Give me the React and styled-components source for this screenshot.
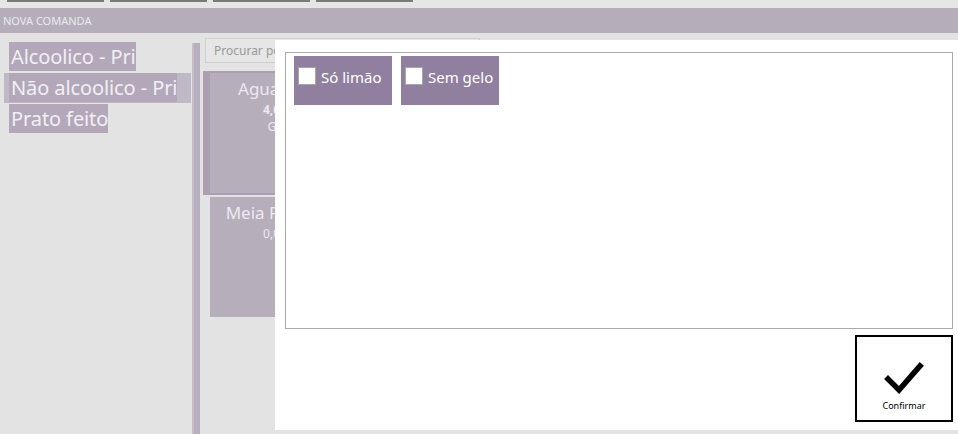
import React from 'react';
import styled, { createGlobalStyle } from 'styled-components';

const GlobalStyle = createGlobalStyle`
  html, body {
    margin: 0;
    padding: 0;
    background: #e3e3e3;
    font-family: "Noto Sans", "Open Sans", sans-serif;
  }
`;

const categories = [
  { name: 'Alcoolico - Pri' },
  { name: 'Não alcoolico - Pri', selected: true },
  { name: 'Prato feito' },
];

const options = ['Só limão', 'Sem gelo'];

const App = () => {
  return (
    <Page>
      <GlobalStyle />
      <Toolbar>
        <ToolButton />
        <ToolButton />
        <ToolButton />
        <ToolButton />
      </Toolbar>
      <Header>NOVA COMANDA</Header>
      <Body>
        <CategoryList>
          {categories.map((c) => (
            <CategoryRow key={c.name} $selected={c.selected}>
              <CategoryLabel>{c.name}</CategoryLabel>
            </CategoryRow>
          ))}
        </CategoryList>
        <ScrollBar />
        <Products>
          <Search placeholder="Procurar por nome" />
          <Tile $selected>
            <TileInner>
              <TileName>Agua gás</TileName>
              <TilePrice $bold>4,00</TilePrice>
              <TileUnit>GF</TileUnit>
            </TileInner>
          </Tile>
          <Tile>
            <TileInner>
              <TileName>Meia Porção</TileName>
              <TilePrice>0,00</TilePrice>
            </TileInner>
          </Tile>
        </Products>
      </Body>

      <Modal>
        <OptionsBox>
          {options.map((o) => (
            <Option key={o}>
              <Check />
              <OptionText>{o}</OptionText>
            </Option>
          ))}
        </OptionsBox>
        <Footer>
          <ConfirmButton>
            <svg width="40" height="34" viewBox="0 0 40 34">
              <polyline
                points="4,18 15,29 36,5"
                fill="none"
                stroke="#000"
                strokeWidth="5.5"
                strokeLinecap="square"
              />
            </svg>
            <ConfirmText>Confirmar</ConfirmText>
          </ConfirmButton>
        </Footer>
      </Modal>
    </Page>
  );
};

const Page = styled.div`
  position: relative;
  width: 958px;
  height: 434px;
  overflow: hidden;
  background: #e3e3e3;
`;

const Toolbar = styled.div`
  height: 8px;
  display: flex;
  align-items: flex-end;
  gap: 6px;
  padding-left: 7px;
  background: #e6e6e6;
  overflow: hidden;
`;

const ToolButton = styled.div`
  flex: none;
  width: 93px;
  height: 30px;
  margin-bottom: 6px;
  border: 2px solid #7a7a7a;
`;

const Header = styled.div`
  height: 25px;
  line-height: 25px;
  padding-left: 3px;
  background: #b5aeba;
  color: #ebe7ef;
  font-size: 11px;
`;

const Body = styled.div`
  display: flex;
  height: 401px;
`;

const CategoryList = styled.div`
  width: 187px;
  padding: 9px 0 0 4px;
  flex: none;
`;

const CategoryRow = styled.div`
  height: 30px;
  padding-left: 5px;
  margin-bottom: 1px;
  background: ${(p) => (p.$selected ? '#c0b8c4' : 'transparent')};
`;

const CategoryLabel = styled.span`
  display: inline-block;
  height: 29px;
  line-height: 29px;
  padding: 0 0 0 2px;
  background: #b3a8b9;
  color: #f2eff4;
  font-size: 20px;
  letter-spacing: -0.1px;
  white-space: nowrap;
`;

const ScrollBar = styled.div`
  flex: none;
  width: 8px;
  margin: 10px 0 0 1px;
  background: #b7afbd;
  border-left: 2px solid #c6bfca;
  box-sizing: border-box;
`;

const Products = styled.div`
  flex: 1;
  padding: 5px 0 0 3px;
  display: flex;
  flex-direction: column;
  align-items: flex-start;
`;

const Search = styled.input`
  width: 275px;
  height: 25px;
  box-sizing: border-box;
  margin: 0 0 8px 2px;
  padding: 0 8px;
  border: 1px solid #cfcfcf;
  background: #e6e6e6;
  font-family: "Noto Sans", sans-serif;
  font-size: 12px;
  outline: none;
  &::placeholder {
    color: #999;
  }
`;

const Tile = styled.div`
  box-sizing: border-box;
  width: ${(p) => (p.$selected ? '144px' : '130px')};
  height: ${(p) => (p.$selected ? '124px' : '120px')};
  margin: ${(p) => (p.$selected ? '0 0 2px 0' : '0 0 0 7px')};
  padding: ${(p) => (p.$selected ? '2px 7px' : '0')};
  background: #ab9fb1;
`;

const TileInner = styled.div`
  height: 100%;
  background: #b7aebc;
  display: flex;
  flex-direction: column;
  align-items: center;
  padding-top: 4px;
  box-sizing: border-box;
  color: #ece9ef;
`;

const TileName = styled.div`
  font-size: 17px;
  white-space: nowrap;
`;

const TilePrice = styled.div`
  font-size: 12px;
  font-weight: ${(p) => (p.$bold ? 'bold' : 'normal')};
  margin-top: 1px;
`;

const TileUnit = styled.div`
  font-size: 12px;
`;

const Modal = styled.div`
  position: absolute;
  left: 275px;
  top: 40px;
  width: 683px;
  height: 390px;
  background: #fff;
  padding: 12px 5px 0 10px;
  box-sizing: border-box;
`;

const OptionsBox = styled.div`
  height: 277px;
  box-sizing: border-box;
  border: 1px solid #a9a9a9;
  padding: 3px 8px;
  display: flex;
  align-items: flex-start;
  gap: 9px;
`;

const Option = styled.div`
  width: 98px;
  height: 49px;
  background: #917f9f;
  display: flex;
  align-items: flex-start;
  padding: 11px 0 0 4px;
  box-sizing: border-box;
`;

const Check = styled.span`
  width: 18px;
  height: 18px;
  box-sizing: border-box;
  background: #fff;
  border: 1px solid #a8a8a8;
  flex: none;
`;

const OptionText = styled.span`
  margin-left: 5px;
  color: #fff;
  font-size: 15px;
  line-height: 20px;
  white-space: nowrap;
`;

const Footer = styled.div`
  display: flex;
  justify-content: flex-end;
  margin-top: 6px;
`;

const ConfirmButton = styled.div`
  width: 98px;
  height: 87px;
  box-sizing: border-box;
  border: 2px solid #000;
  display: flex;
  flex-direction: column;
  align-items: center;
  padding-top: 24px;
`;

const ConfirmText = styled.div`
  margin-top: 4px;
  font-size: 9px;
  color: #000;
`;

export default App;
